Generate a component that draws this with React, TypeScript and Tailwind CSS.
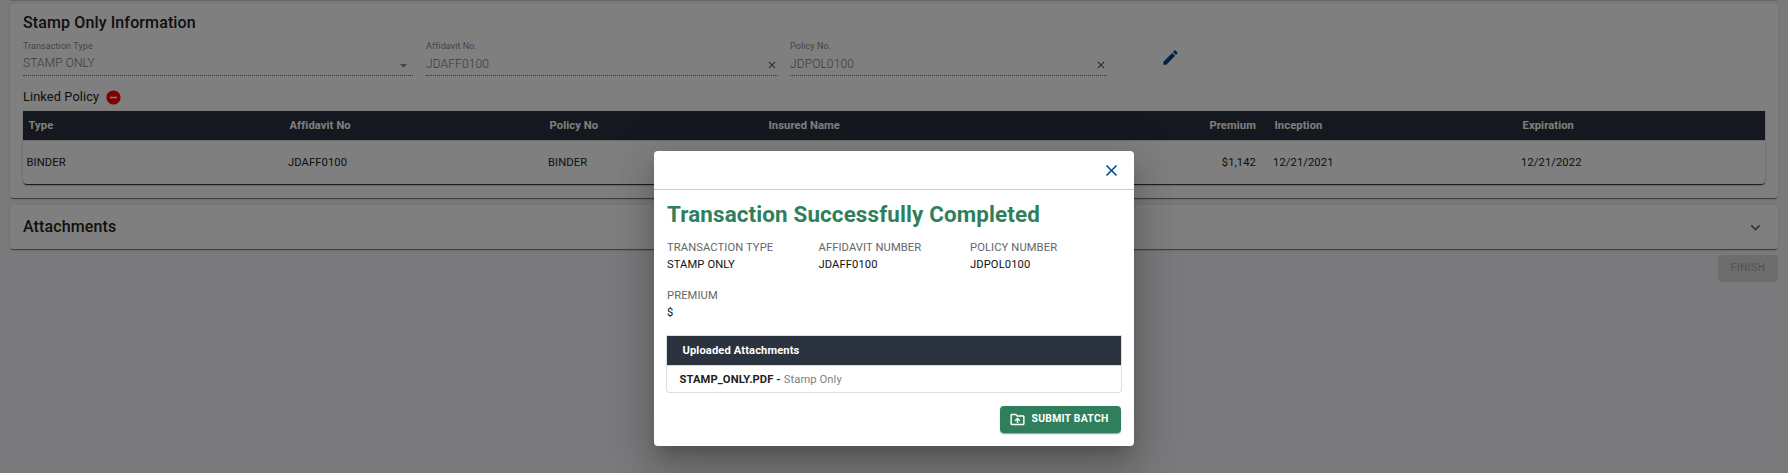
import type { ReactNode } from 'react';
import {
  MdArrowDropDown,
  MdClose,
  MdEdit,
  MdExpandMore,
  MdOutlineDriveFolderUpload,
  MdRemoveCircle,
} from 'react-icons/md';

type FieldProps = {
  label: string;
  value: string;
  className: string;
  valueClassName?: string;
  icon: ReactNode;
};

function Field({ label, value, className, valueClassName = 'leading-[22px]', icon }: FieldProps) {
  return (
    <div className={`flex h-[36px] flex-col border-b border-dotted border-[#6b6b6b] ${className}`}>
      <span className="h-[13px] text-[9px] leading-[13px] tracking-[0.08px] text-[#8a8a8a]">{label}</span>
      <div className="flex h-[22px] items-start justify-between">
        <span className={`text-[12px] font-light tracking-[0.11px] text-[#777777] ${valueClassName}`}>{value}</span>
        {icon}
      </div>
    </div>
  );
}

const columns = 'grid grid-cols-[260px_260px_219px_247px_248px_248px_260px]';

function LinkedPolicyTable() {
  return (
    <div className="mt-[4px] h-[73px] rounded-b-[4px] bg-white text-[11.2px] tracking-[0.1px] shadow-[0_2px_1px_-1px_rgba(0,0,0,0.7),0_1px_1px_rgba(0,0,0,0.3),0_1px_3px_rgba(0,0,0,0.2)]">
      <div className={`${columns} h-[29px] bg-[#2b313d] leading-[29px] font-bold text-white`}>
        <span className="pl-[5.5px]">Type</span>
        <span className="pl-[6.5px]">Affidavit No</span>
        <span className="pl-[6.5px]">Policy No</span>
        <span className="pl-[6.5px]">Insured Name</span>
        <span className="pr-[1px] text-right">Premium</span>
        <span className="pl-[17.5px]">Inception</span>
        <span className="pl-[17.5px]">Expiration</span>
      </div>
      <div className={`${columns} h-[44px] border-t border-[#d8d8d8] leading-[43px]`}>
        <span className="pl-[3.5px]">BINDER</span>
        <span className="pl-[5px]">JDAFF0100</span>
        <span className="pl-[5px]">BINDER</span>
        <span />
        <span className="pr-[1px] text-right">$1,142</span>
        <span className="pl-[16px]">12/21/2021</span>
        <span className="pl-[16px]">12/21/2022</span>
      </div>
    </div>
  );
}

function Detail({ label, value }: { label: string; value: string }) {
  return (
    <div className="flex h-[48px] flex-col text-[11.2px] leading-[17px] tracking-[0.1px]">
      <span className="text-[#666666]">{label}</span>
      <span className="text-[#111111]">{value}</span>
    </div>
  );
}

function CompletedDialog() {
  return (
    <div className="flex h-[295px] w-[480px] flex-col rounded-[4px] bg-white shadow-[0_11px_15px_-7px_rgba(0,0,0,0.2),0_24px_38px_3px_rgba(0,0,0,0.14),0_9px_46px_8px_rgba(0,0,0,0.12)]">
      <div className="flex h-[39px] items-center justify-end border-b border-[#cccccc] pr-[13px]">
        <MdClose className="size-[19px] text-[#00498c]" />
      </div>
      <div className="flex flex-col px-[13px]">
        <h1 className="mt-[9px] h-[30px] text-[22.4px] leading-[30px] font-bold tracking-[0.13px] whitespace-nowrap text-[#2f7f5d]">
          Transaction Successfully Completed
        </h1>
        <div className="mt-[10px] grid grid-cols-[151.5px_151.5px_151px]">
          <Detail label="TRANSACTION TYPE" value="STAMP ONLY" />
          <Detail label="AFFIDAVIT NUMBER" value="JDAFF0100" />
          <Detail label="POLICY NUMBER" value="JDPOL0100" />
          <Detail label="PREMIUM" value="$" />
        </div>
        <div className="mt-px h-[56px] rounded-b-[3px] text-[11.2px] tracking-[0.1px] shadow-[0_0_0_1px_#dedede]">
          <div className="h-[29px] bg-[#2b333e] pl-[15.5px] leading-[29px] font-bold text-white">
            Uploaded Attachments
          </div>
          <div className="h-[27px] border-t border-[#dcdcdc] pl-[12.5px] leading-[27px] text-[#808080]">
            <span className="font-bold text-[#212121]">STAMP_ONLY.PDF - </span>
            Stamp Only
          </div>
        </div>
        <button className="mt-[14px] flex h-[27px] w-[121px] items-center self-end rounded-[4px] bg-[#2f7f5d] pl-[8.5px] text-[10.4px] font-bold tracking-[0.25px] whitespace-nowrap text-white shadow-[0_2px_1px_-1px_rgba(0,0,0,0.2),0_1px_1px_rgba(0,0,0,0.14),0_1px_3px_rgba(0,0,0,0.12)]">
          <MdOutlineDriveFolderUpload className="mr-[6px] size-[17px]" />
          <span className="-mt-px">SUBMIT BATCH</span>
        </button>
      </div>
    </div>
  );
}

export default function App() {
  return (
    <div className="relative h-[473px] overflow-hidden bg-[#f4f4f8] font-[Roboto,sans-serif] text-[#212121]">
      <div className="flex flex-col px-[10px]">
        <div className="h-px bg-[#cfcfd4]" />
        <section className="mt-[3px] flex h-[194px] flex-col rounded-[4px] bg-white px-[13px] shadow-[0_2px_1px_-1px_rgba(0,0,0,0.4),0_1px_1px_rgba(0,0,0,0.14),0_1px_3px_rgba(0,0,0,0.12)]">
          <h2 className="mt-[8px] h-[21px] text-[16px] leading-[21px] font-medium tracking-[0.12px]">
            Stamp Only Information
          </h2>
          <div className="mt-[7px] flex items-start">
            <Field
              label="Transaction Type"
              value="STAMP ONLY"
              className="w-[390px]"
              valueClassName="leading-[20px]"
              icon={<MdArrowDropDown className="mt-[4px] mr-px size-[17px] text-[#8a8a8a]" />}
            />
            <Field
              label="Affidavit No."
              value="JDAFF0100"
              className="ml-[13px] w-[352px]"
              icon={<MdClose className="mt-[6px] size-[12px] text-[#555555]" />}
            />
            <Field
              label="Policy No."
              value="JDPOL0100"
              className="ml-[12px] w-[317px]"
              icon={<MdClose className="mt-[6px] size-[12px] text-[#555555]" />}
            />
            <MdEdit className="mt-[8px] ml-[54px] size-[19px] text-[#00498c]" />
          </div>
          <div className="mt-[11px] flex h-[20px] items-center gap-[6px]">
            <span className="text-[12.8px] leading-[20px] tracking-[0.1px]">Linked Policy</span>
            <MdRemoveCircle className="size-[17px] text-[#ff0000]" />
          </div>
          <LinkedPolicyTable />
        </section>
        <section className="mt-[7px] flex h-[44px] items-center justify-between rounded-[4px] bg-white pr-[13px] pl-[13px] shadow-[0_2px_1px_-1px_rgba(0,0,0,0.4),0_1px_1px_rgba(0,0,0,0.14),0_1px_3px_rgba(0,0,0,0.12)]">
          <h2 className="text-[16px] font-medium tracking-[0.12px]">Attachments</h2>
          <MdExpandMore className="size-[19px] text-[#666666]" />
        </section>
        <button className="mt-[6px] flex h-[27px] w-[60px] items-center justify-center self-end rounded-[4px] bg-[#dadadd] pb-[2px] text-[10.4px] tracking-[0.4px] text-[#a3a3a6]">
          FINISH
        </button>
      </div>
      <div className="absolute inset-0 flex items-start justify-center bg-black/50 pt-[151px]">
        <CompletedDialog />
      </div>
    </div>
  );
}
